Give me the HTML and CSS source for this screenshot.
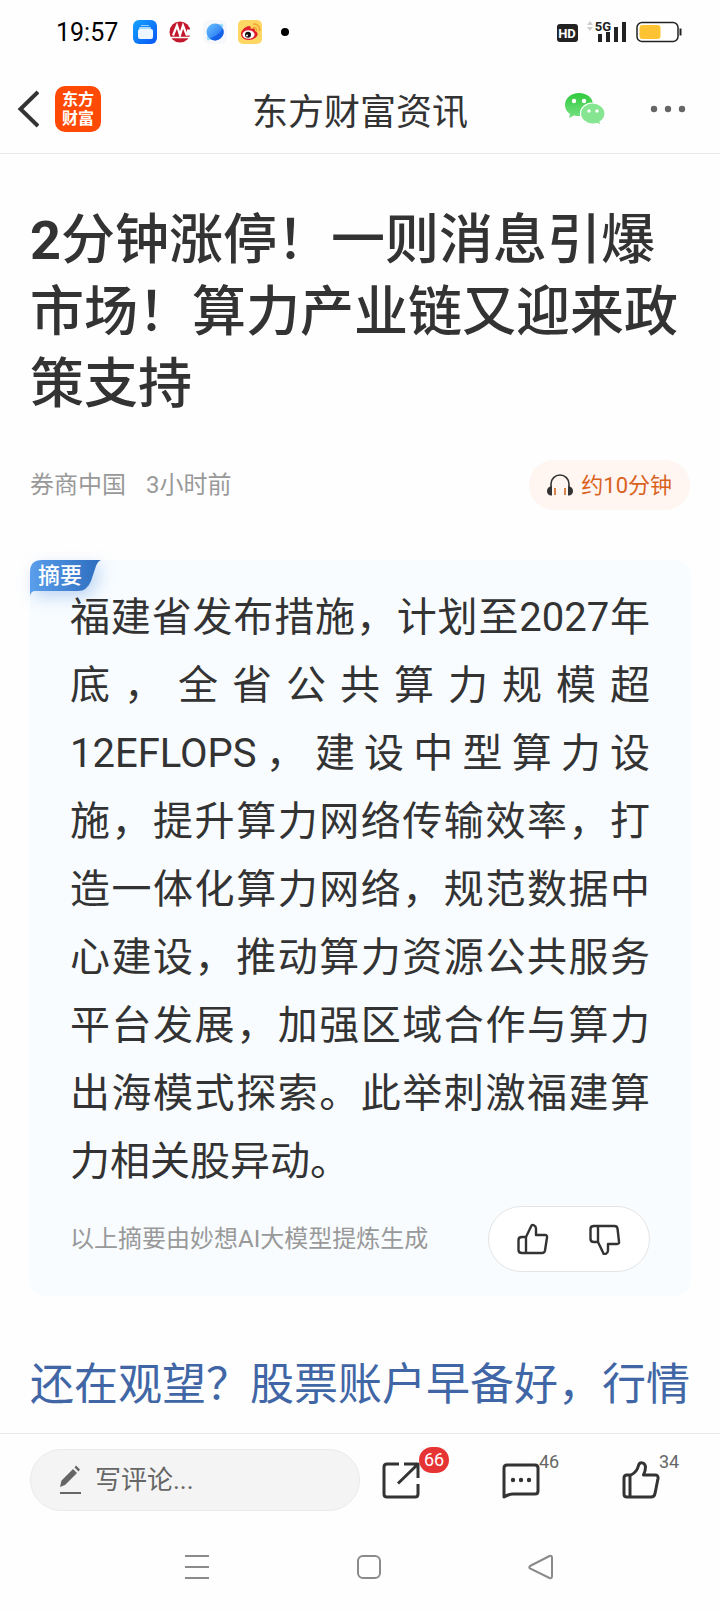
FILE: index.html
```html
<!DOCTYPE html>
<html lang="zh-CN">

<head>
  <meta charset="UTF-8">
  <meta name="viewport" content="width=device-width, initial-scale=1.0">
  <title>东方财富资讯</title>
  <link rel="stylesheet" href="styles.css">
</head>

<body>
  <!-- 状态栏 -->
  <div class="status">
    <span class="time">19:57</span>
    <div class="apps">
      <svg width="24" height="24" viewBox="0 0 24 24">
        <defs>
          <linearGradient id="blue" x1="0" y1="0" x2="1" y2="1">
            <stop offset="0" stop-color="#14a4ff" />
            <stop offset="1" stop-color="#0a55f5" />
          </linearGradient>
        </defs>
        <rect width="24" height="24" rx="6" fill="url(#blue)" />
        <rect x="8" y="5" width="8" height="1" fill="#8fd0ff" />
        <rect x="6" y="7" width="12" height="2" rx="1" fill="#a9dbff" />
        <rect x="5" y="9" width="15" height="10" rx="2" fill="#eef7ff" />
      </svg>
      <svg width="24" height="24" viewBox="0 0 24 24">
        <circle cx="12" cy="12" r="10.500" fill="#c2172d" />
        <path d="M19 9.500h5v6h-5z" fill="#fff" />
        <path d="M5 15.500L9 5.500L12 15L15 5.500L19 15.500" fill="none" stroke="#fff" stroke-width="2.200" />
        <path d="M3 17.500h18" stroke="#fff" stroke-width="1.500" />
      </svg>
      <svg width="24" height="24" viewBox="0 0 24 24">
        <defs>
          <linearGradient id="planet" x1="0" y1="0" x2="1" y2="1">
            <stop offset="0" stop-color="#6cc4ff" />
            <stop offset="1" stop-color="#1564ee" />
          </linearGradient>
        </defs>
        <rect width="24" height="24" rx="6" fill="#f6f8fb" />
        <ellipse cx="12" cy="12" rx="11" ry="4" fill="#9fdcff" transform="rotate(-45 12 12)" />
        <circle cx="12" cy="12" r="8.500" fill="url(#planet)" />
        <path d="M20 8.500a8.500 8.500 0 0 1-13 10c5-2 10-5 13-10z" fill="#1560e8" />
      </svg>
      <svg width="24" height="24" viewBox="0 0 24 24">
        <rect width="24" height="24" rx="5" fill="#fdd663" />
        <path d="M3 14c0-4 5-8 8-8 2 0 2 2 1.500 3 3-1 5-.500 4.500 2 2 .700 3 2 2.500 4-.800 3-5 5-9 5-4.500 0-7.500-3-7.500-6z" fill="#e0202c" />
        <ellipse cx="10.500" cy="14.500" rx="6" ry="4.300" fill="#fff" />
        <circle cx="10" cy="14.800" r="3" fill="#111" />
        <circle cx="9" cy="15.500" r="1" fill="#fff" />
        <path d="M15 7.500c2-.500 4 1 3.500 3.500M15 4.200c4-.800 7.500 2.500 6.500 7" fill="none" stroke="#f2a02c" stroke-width="1.500" />
      </svg>
    </div>
    <span class="dot"></span>
    <svg class="signal" width="126" height="24" viewBox="0 0 126 24">
      <rect x="1" y="4" width="21" height="18" rx="3" fill="#222" />
      <text x="11" y="18" class="hd">HD</text>
      <path d="M31 5l3-4 3 4zM31 7l3 4 3-4z" fill="#ccc" />
      <text x="47" y="11" class="net">5G</text>
      <path d="M42 14h4v8h-4zM50 12h4v10h-4zM58 7h4v15h-4zM66 2h4v20h-4z" fill="#222" />
      <rect x="81" y="2.500" width="41" height="19" rx="5" fill="#fff" stroke="#222" stroke-width="1.500" />
      <rect x="83.500" y="5" width="21" height="14" rx="3" fill="#ffc233" />
      <path d="M124.500 8.500v7" stroke="#222" stroke-width="2" />
    </svg>
  </div>

  <!-- 顶部导航 -->
  <header class="header">
    <div class="side">
      <button class="back" aria-label="返回">
        <svg width="22" height="38" viewBox="0 0 22 38">
          <path d="M21 2L3.500 19L21 36" fill="none" stroke="#333" stroke-width="4" />
        </svg>
      </button>
      <a class="logo" href="#"><span>东方</span><span>财富</span></a>
    </div>
    <h2 class="name">东方财富资讯</h2>
    <div class="side right">
      <button aria-label="微信">
        <svg width="42" height="34" viewBox="0 0 42 34">
          <defs>
            <linearGradient id="green" x1="0" y1="0" x2="0" y2="1">
              <stop offset="0" stop-color="#2fca3c" />
              <stop offset="1" stop-color="#78e084" />
            </linearGradient>
          </defs>
          <path d="M15 1C7 1 1 6 1 13c0 4 2 7 5 9l-1 4 5-2.500c2 .500 3 .500 5 .500 8 0 14-5 14-11.500S23 1 15 1z" fill="url(#green)" />
          <path d="M28.500 11C22 11 16.500 15.500 16.500 21.500S22 32 28.500 32c1.500 0 3 0 4.500-.500l4 2-1-3.500c3-2 5-5 5-8.500C41 15.500 35 11 28.500 11z" fill="#86e591" stroke="#fff" stroke-width="1.200" />
          <circle cx="10" cy="9" r="2.200" fill="#fff" />
          <circle cx="20" cy="9" r="2.200" fill="#fff" />
          <circle cx="25" cy="19" r="1.700" fill="#fff" />
          <circle cx="33" cy="19" r="1.700" fill="#fff" />
        </svg>
      </button>
      <button aria-label="更多">
        <svg width="36" height="8" viewBox="0 0 36 8">
          <g fill="#666">
            <circle cx="4" cy="4" r="3.200" />
            <circle cx="18" cy="4" r="3.200" />
            <circle cx="32" cy="4" r="3.200" />
          </g>
        </svg>
      </button>
    </div>
  </header>

  <!-- 正文 -->
  <main class="article">
    <h1 class="title"><b>2</b>分钟涨停！一则消息引爆市场！算力产业链又迎来政策支持</h1>
    <div class="info">
      <span>券商中国</span>
      <span>3小时前</span>
      <button class="listen">
        <svg width="28" height="24" viewBox="0 0 28 24">
          <path d="M5 15V11a9 9 0 0 1 18 0v4" fill="none" stroke="#333" stroke-width="1.600" />
          <path d="M6 13v9.500C2.500 22.500 1 20.500 1 18s1.500-4.500 5-5zM22 13v9.500c3.500 0 5-2 5-4.500s-1.500-4.500-5-5z" fill="#333" />
          <path d="M9 15v7M19 15v7" stroke="#d9824a" stroke-width="2" />
        </svg>
        <span>约10分钟</span>
      </button>
    </div>

    <section class="summary">
      <div class="tag">
        <svg width="72" height="36" viewBox="0 0 72 36">
          <defs>
            <linearGradient id="tag" x1="0" y1="0" x2="1" y2="0">
              <stop offset="0" stop-color="#5a9eec" />
              <stop offset="1" stop-color="#2c6dbd" />
            </linearGradient>
          </defs>
          <path d="M0 36V12Q0 0 12 0H71Q68 1 66 6L61 21Q57 31 48 31H5Q1 31 0 36z" fill="url(#tag)" />
        </svg>
        <span>摘要</span>
      </div>
      <p class="text">福建省发布措施，计划至2027年底，全省公共算力规模超12EFLOPS，建设中型算力设施，提升算力网络传输效率，打造一体化算力网络，规范数据中心建设，推动算力资源公共服务平台发展，加强区域合作与算力出海模式探索。此举刺激福建算力相关股异动。</p>
      <div class="foot">
        <span>以上摘要由妙想AI大模型提炼生成</span>
        <div class="vote">
          <button aria-label="赞">
            <svg width="32" height="32" viewBox="0 0 32 32">
              <path d="M9 14L14.500 2.500C15 1 19 2.500 19 5.500V12h9q2.500 0 2 2.500l-2 13q-.500 2.500-3 2.500H5q-3.500 0-3.500-3V17q0-3 3.500-3zM9 14v16" />
            </svg>
          </button>
          <button aria-label="踩">
            <svg width="32" height="32" viewBox="0 0 32 32">
              <path d="M9 19L14.500 30.500C15 32 19 30.500 19 27.500V21h9q2.500 0 2-2.500L28.500 5.500q-.500-2.500-3-2.500H5Q1.500 3 1.500 6v10q0 3 3.500 3zM9 19V3" />
            </svg>
          </button>
        </div>
      </div>
    </section>

    <a class="ad" href="#">还在观望？股票账户早备好，行情</a>
  </main>

  <!-- 底部工具栏 -->
  <footer class="toolbar">
    <label class="comment">
      <svg width="24" height="30" viewBox="0 0 24 30">
        <path d="M1 22L2.500 15.500L14 4L18 8L6 20zM15.500 2.500L17 .500L21 4.500L19.500 6.500z" fill="#666" />
        <path d="M1 28h21" stroke="#666" stroke-width="2" />
      </svg>
      <input type="text" placeholder="写评论..." aria-label="写评论">
    </label>
    <div class="actions">
      <button aria-label="分享">
        <svg width="38" height="38" viewBox="0 0 38 38">
          <path d="M17 3H5Q2 3 2 6v27q0 3 3 3h28q3 0 3-3V23M16 22.500L35 4M22 3h14v14" />
        </svg>
        <span class="num badge">66</span>
      </button>
      <button aria-label="评论">
        <svg width="38" height="38" viewBox="0 0 38 38">
          <path d="M2 36V7q0-3 3-3h28q3 0 3 3v23q0 3-3 3H11q-4 0-9 3z" />
          <g fill="#333" stroke="none">
            <circle cx="11" cy="19" r="2.200" />
            <circle cx="19" cy="19" r="2.200" />
            <circle cx="27" cy="19" r="2.200" />
          </g>
        </svg>
        <span class="num">46</span>
      </button>
      <button aria-label="点赞">
        <svg width="38" height="38" viewBox="0 0 38 38">
          <path d="M9 14Q15 11 16.500 4.500C17.500 .500 23 1 23.500 6q0 4-2 8H33q3.500 0 3 3.500l-3 15Q32.500 36 29 36H5q-3 0-3-3V17q0-3 3-3zM8 14v22" />
        </svg>
        <span class="num">34</span>
      </button>
    </div>
  </footer>

  <!-- 系统导航 -->
  <nav class="system">
    <button aria-label="菜单">
      <svg width="28" height="28" viewBox="0 0 28 28">
        <path d="M2 3h24M2 14h24M2 25h24" />
      </svg>
    </button>
    <button aria-label="主页">
      <svg width="28" height="28" viewBox="0 0 28 28">
        <rect x="3" y="3" width="22" height="22" rx="5" />
      </svg>
    </button>
    <button aria-label="后退">
      <svg width="28" height="28" viewBox="0 0 28 28">
        <path d="M3 13L22.500 3Q25 2 25 5v18q0 3-2.500 2L3 15.500Q1.500 14 3 13z" />
      </svg>
    </button>
  </nav>
</body>

</html>
```
FILE: styles.css
```css
* {
  margin: 0;
  padding: 0;
  box-sizing: border-box;
}

body {
  display: flex;
  flex-direction: column;
  min-height: 100vh;
  background-color: #fefefe;
  color: #333;
  font-family: Roboto, "Noto Sans CJK SC", sans-serif;
}

button {
  display: flex;
  align-items: center;
  border: none;
  background: none;
  color: inherit;
  font-family: inherit;
}

a {
  text-decoration: none;
}

svg {
  display: block;
  flex-shrink: 0;
}

/* 状态栏 */
.status {
  display: flex;
  align-items: center;
  height: 64px;
  padding: 0 38px 0 56px;
}

.time {
  color: #000;
  font-size: 25px;
}

.apps {
  display: flex;
  gap: 11px;
  margin-left: 15px;
}

.dot {
  width: 8px;
  height: 8px;
  margin-left: 19px;
  border-radius: 50%;
  background-color: #000;
}

.signal {
  margin-left: auto;
}

.hd,
.net {
  font-size: 13px;
  font-weight: bold;
  text-anchor: middle;
  fill: #fff;
}

.net {
  fill: #222;
}

/* 顶部导航 */
.header {
  display: grid;
  grid-template-columns: 1fr auto 1fr;
  align-items: center;
  height: 90px;
  padding: 0 17px;
  border-bottom: 1px solid #e8e8e8;
}

.side {
  display: flex;
  align-items: center;
  gap: 16px;
}

.right {
  justify-content: flex-end;
  gap: 44px;
  padding-right: 17px;
}

.logo {
  display: flex;
  flex-direction: column;
  align-items: center;
  justify-content: center;
  width: 46px;
  height: 46px;
  border-radius: 10px;
  background-color: #ff4a05;
  color: #fff;
  font-size: 16px;
  font-weight: bold;
  line-height: 19px;
}

.name {
  font-size: 36px;
  font-weight: normal;
}

/* 正文 */
.article {
  flex: 1;
  padding: 51px 30px 0;
}

.title {
  font-size: 54px;
  font-weight: 500;
  line-height: 72px;
}

.info {
  display: flex;
  align-items: center;
  gap: 20px;
  margin-top: 39px;
  color: #999;
  font-size: 24px;
}

.info span,
.foot span {
  padding-bottom: 5px;
}

.listen {
  gap: 7px;
  height: 50px;
  margin-left: auto;
  padding: 0 18px 0 17px;
  border-radius: 25px;
  background-color: #fff5f1;
  color: #d9631e;
  font-size: 22px;
}

.summary {
  position: relative;
  margin-top: 50px;
  padding: 24px 40px;
  border-radius: 14px;
  background-color: #f8fcff;
}

.tag {
  position: absolute;
  left: 0;
  top: 0;
  color: #fff;
  font-size: 22px;
  font-weight: 500;
  line-height: 32px;
}

.tag svg {
  filter: drop-shadow(4px 6px 8px rgba(60, 130, 220, .3));
}

.tag span {
  position: absolute;
  left: 8px;
  top: 0;
  white-space: nowrap;
}

.text {
  position: relative;
  font-size: 40px;
  line-height: 68px;
  text-align: justify;
}

.foot {
  display: flex;
  align-items: center;
  justify-content: space-between;
  margin-top: 10px;
  color: #999;
  font-size: 24px;
}

.vote {
  display: flex;
  align-items: center;
  justify-content: space-between;
  width: 162px;
  height: 66px;
  padding: 0 28px;
  border: 1px solid #e4e4e4;
  border-radius: 33px;
  background-color: #fff;
}

.vote svg,
.actions svg {
  fill: none;
  stroke: #333;
  stroke-width: 2.4;
  stroke-linejoin: round;
}

.ad {
  display: block;
  margin-top: 56px;
  color: #4166a5;
  font-size: 44px;
  line-height: 66px;
}

/* 底部工具栏 */
.toolbar {
  display: flex;
  align-items: center;
  height: 92px;
  padding: 0 60px 0 30px;
  border-top: 1px solid #e8e8e8;
}

.comment {
  display: flex;
  flex: 1;
  align-items: center;
  gap: 12px;
  min-width: 0;
  height: 62px;
  padding: 0 28px;
  border: 1px solid #eaeaea;
  border-radius: 31px;
  background-color: #f4f4f4;
}

.comment input {
  flex: 1;
  min-width: 0;
  border: none;
  outline: none;
  background: none;
  font-family: inherit;
  font-size: 26px;
}

.comment input::placeholder {
  color: #666;
}

.actions {
  display: flex;
  flex: 0 0 300px;
  justify-content: space-between;
  padding-left: 22px;
}

.actions button {
  position: relative;
}

.actions svg {
  stroke-width: 3;
}

.num {
  position: absolute;
  left: 37px;
  top: -12px;
  color: #666;
  font-size: 18px;
  line-height: 26px;
}

.badge {
  top: -14px;
  width: 30px;
  border-radius: 13px;
  background-color: #e63333;
  color: #fff;
}

/* 系统导航 */
.system {
  display: flex;
  justify-content: center;
  gap: 144px;
  padding: 28px 0 31px 18px;
}

.system svg {
  fill: none;
  stroke: #8a8a8a;
  stroke-width: 2;
}
```
